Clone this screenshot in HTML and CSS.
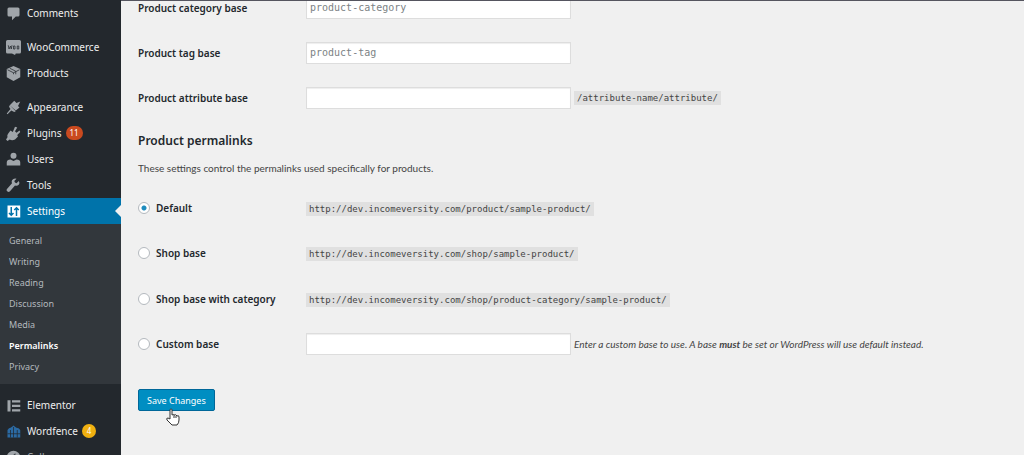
FILE: index.html
```html
<!DOCTYPE html>
<html lang="en">
<head>
  <meta charset="UTF-8">
  <meta name="viewport" content="width=device-width, initial-scale=1.0">
  <title>Permalink Settings</title>
  <link rel="stylesheet" href="styles.css">
</head>
<body>
  <nav class="admin-menu">
    <ul class="menu">
      <li><a href="#">
        <svg class="icon" viewBox="0 0 20 20"><path d="M4 2h12q2 0 2 2v8q0 2-2 2h-3l-5 5v-5H4q-2 0-2-2V4q0-2 2-2z"/></svg>
        Comments</a></li>
      <li class="separator"></li>
      <li><a href="#">
        <svg class="icon" viewBox="0 0 20 20"><path d="M2 0h16q2 0 2 2v14q0 2-2 2h-5l-1 2-4-2H2q-2 0-2-2V2q0-2 2-2z"/><path class="line" d="M3 7l1 5 2-4 1 4 1-5M10 8h2v4h-2zM15 8h2v4h-2z"/></svg>
        WooCommerce</a></li>
      <li><a href="#">
        <svg class="icon" viewBox="0 0 20 20"><path d="M10 0l9 4v11l-9 5-9-5V4z"/><path class="line" d="M2 5l8 4 8-4M10 9v2M5 3l8 4v4"/></svg>
        Products</a></li>
      <li class="separator"></li>
      <li><a href="#">
        <svg class="icon" viewBox="0 0 20 20"><path d="M8 4l3-3 3 3 5-2-3 6 2 2-5 4-8-7zM5 7l8 8-2 1-4-2-5 5-1-1 5-6-2-3z"/></svg>
        Appearance</a></li>
      <li><a href="#">
        <svg class="icon" viewBox="0 0 20 20"><path d="M12 1l3 1-3 5 2 2 4-3 1 2-4 4 1 2-4 4q-4 2-7 0l-3 2-2-2 2-3q-1-3 1-5l3-4 3 2z"/></svg>
        Plugins <span class="badge">11</span></a></li>
      <li><a href="#">
        <svg class="icon" viewBox="0 0 20 20"><circle cx="10" cy="5" r="4"/><path d="M1 18v-4q0-4 5-4l4 2 4-2q5 0 5 4v4z"/></svg>
        Users</a></li>
      <li><a href="#">
        <svg class="icon" viewBox="0 0 20 20"><path d="M17 4l-3 3-2-1-1-2 3-3q-4-1-6 2-1 2 0 4l-7 8q-1 2 1 3 1 1 3 0l7-8q3 1 5-1 2-2 0-5z"/></svg>
        Tools</a></li>
      <li class="current"><a href="#">
        <svg class="icon" viewBox="0 0 20 20"><path d="M2 2h17v16H2z"/><path class="line" d="M7 4v11M4 12l3 3 3-3M14 16V5M11 8l3-3 3 3"/></svg>
        Settings</a>
        <ul class="submenu">
          <li><a href="#">General</a></li>
          <li><a href="#">Writing</a></li>
          <li><a href="#">Reading</a></li>
          <li><a href="#">Discussion</a></li>
          <li><a href="#">Media</a></li>
          <li><a class="active" href="#">Permalinks</a></li>
          <li><a href="#">Privacy</a></li>
        </ul>
      </li>
      <li class="separator"></li>
      <li><a href="#">
        <svg class="icon" viewBox="0 0 20 20"><path d="M2 3h4v15H2zM8 3h11v3H8zM8 9h11v3H8zM8 15h11v3H8z"/></svg>
        Elementor</a></li>
      <li><a href="#">
        <svg class="icon wordfence" viewBox="0 0 20 20"><path d="M2 18V8q2-3 4-3 2-1 4-3 2 2 4 3 3 0 5 3v10z"/><path class="line" d="M10 4v14M6 8v10M15 8v10M2 13h17"/></svg>
        Wordfence <span class="badge yellow">4</span></a></li>
      <li><a class="collapse" href="#">
        <svg class="icon" viewBox="0 0 20 20"><circle cx="10" cy="10" r="9"/><path class="line" d="M12 5l-5 5 5 5z"/></svg>
        Collapse</a></li>
    </ul>
  </nav>

  <main class="content">
    <form class="settings">
      <table class="form-table bases">
        <tr>
          <th><label for="category">Product category base</label></th>
          <td><input type="text" id="category" placeholder="product-category"></td>
        </tr>
        <tr>
          <th><label for="tag">Product tag base</label></th>
          <td><input type="text" id="tag" placeholder="product-tag"></td>
        </tr>
        <tr>
          <th><label for="attribute">Product attribute base</label></th>
          <td><div class="field"><input type="text" id="attribute"><code>/attribute-name/attribute/</code></div></td>
        </tr>
      </table>

      <h2>Product permalinks</h2>
      <p>These settings control the permalinks used specifically for products.</p>

      <table class="form-table permalinks">
        <tr>
          <th><label><input type="radio" name="permalink" checked>Default</label></th>
          <td><code>http://dev.incomeversity.com/product/sample-product/</code></td>
        </tr>
        <tr>
          <th><label><input type="radio" name="permalink">Shop base</label></th>
          <td><code>http://dev.incomeversity.com/shop/sample-product/</code></td>
        </tr>
        <tr>
          <th><label><input type="radio" name="permalink">Shop base with category</label></th>
          <td><code>http://dev.incomeversity.com/shop/product-category/sample-product/</code></td>
        </tr>
        <tr>
          <th><label><input type="radio" name="permalink">Custom base</label></th>
          <td><div class="field"><input type="text" aria-label="Custom base"><span class="description">Enter a custom base to use. A base <strong>must</strong> be set or WordPress will use default instead.</span></div></td>
        </tr>
      </table>

      <div class="submit">
        <button type="submit">Save Changes</button>
        <svg class="pointer" viewBox="0 0 14 18"><path d="M4 11V2q0-1 1-1t1 1v5q2-1 2 0 2-1 3 1 2-1 2 1v3q0 3-2 5H6l-5-5q-1-2 1-2z"/><path d="M8 7v3M10 8v2"/></svg>
      </div>
    </form>
  </main>
</body>
</html>
```

FILE: styles.css
```css
* {
  box-sizing: border-box;
}
body {
  margin: 0;
  display: flex;
  height: 100vh;
  overflow: hidden;
  background-color: #f0f0f0;
  color: #444;
  font-family: "Noto Sans", "Open Sans", sans-serif;
  font-size: 10px;
}
a {
  color: inherit;
  text-decoration: none;
}
/* Sidebar */
.admin-menu {
  flex: none;
  width: 121px;
  background-color: #23282d;
  color: #eee;
}
.menu,
.submenu {
  list-style: none;
  margin: 0;
  padding: 0;
}
.menu > li > a {
  display: flex;
  align-items: center;
  height: 26px;
  padding-left: 6px;
  white-space: nowrap;
}
.menu > .separator {
  height: 8px;
}
.icon {
  flex: none;
  width: 15px;
  height: 15px;
  margin-right: 6px;
  fill: #a0a5aa;
}
.icon .line {
  fill: none;
  stroke: #23282d;
  stroke-width: 1;
}
.icon.wordfence {
  fill: #2b6aa3;
}
.badge {
  min-width: 14px;
  height: 14px;
  margin-left: 4px;
  padding: 0 4px;
  border-radius: 7px;
  background-color: #ca4a1f;
  color: #fff;
  font-size: 8px;
  line-height: 14px;
  text-align: center;
}
.badge.yellow {
  background-color: #f0b010;
}
.current > a {
  position: relative;
  background-color: #0073aa;
  color: #fff;
}
.current > a::after {
  content: "";
  position: absolute;
  right: 0;
  top: 7px;
  border: 6px solid transparent;
  border-right-color: #f0f0f0;
  border-left-width: 0;
}
.current .icon {
  fill: #fff;
}
.current .icon .line {
  stroke: #0073aa;
  stroke-width: 2;
}
.submenu {
  padding: 6px 0 7px;
  background-color: #32373c;
}
.submenu a {
  display: block;
  padding-left: 9px;
  color: #b4b9be;
  font-size: 9px;
  line-height: 21px;
}
.submenu a.active {
  color: #fff;
  font-weight: 600;
}
.menu .collapse {
  color: #a0a5aa;
}
/* Settings form */
.content {
  flex: 1;
  min-width: 0;
  border-top: 1px solid #55555f;
  overflow: hidden;
}
.settings {
  margin-top: -16px;
  padding-left: 17px;
}
.form-table {
  width: 100%;
  border-collapse: collapse;
}
.bases {
  height: 136px;
}
.permalinks {
  height: 182px;
}
th,
td {
  height: 45px;
  padding: 0;
  vertical-align: middle;
  text-align: left;
}
th {
  width: 168px;
  color: #23282d;
  font-weight: 600;
}
th label {
  display: flex;
  align-items: center;
}
.field {
  display: flex;
  align-items: center;
  gap: 3px;
}
input[type="text"] {
  display: block;
  width: 265px;
  height: 22px;
  padding: 2px 3px;
  border: 1px solid #ddd;
  background-color: #fff;
  box-shadow: inset 0 1px 1px #eee;
  font-family: "DejaVu Sans Mono", monospace;
  font-size: 10px;
}
input::placeholder {
  color: #7c8285;
}
input[type="radio"] {
  appearance: none;
  width: 12px;
  height: 12px;
  margin: 0 6px 0 0;
  border: 1px solid #b4b9be;
  border-radius: 50%;
  background-color: #fff;
}
input[type="radio"]:checked {
  background-image: radial-gradient(circle, #1e8cbe 2px, transparent 3px);
}
code {
  padding: 2px 3px;
  background-color: #e0e0e0;
  font-family: "DejaVu Sans Mono", monospace;
  font-size: 9px;
}
.description {
  font-family: Lato, sans-serif;
  font-style: italic;
  white-space: nowrap;
}
h2 {
  margin: 10px 0 0;
  color: #23282d;
  font-size: 12px;
  font-weight: 600;
  line-height: 20px;
}
p {
  margin: 9px 0;
  font-family: Lato, sans-serif;
  line-height: 16px;
}
.submit {
  position: relative;
  margin-top: 22px;
}
button {
  height: 22px;
  padding: 0 8px;
  border: 1px solid #006799;
  border-radius: 2px;
  background-color: #008ec2;
  color: #fff;
  font-family: inherit;
  font-size: 9px;
  cursor: pointer;
}
.pointer {
  position: absolute;
  left: 28px;
  top: 19px;
  width: 14px;
  height: 18px;
  fill: #fff;
  stroke: #333;
}
```
